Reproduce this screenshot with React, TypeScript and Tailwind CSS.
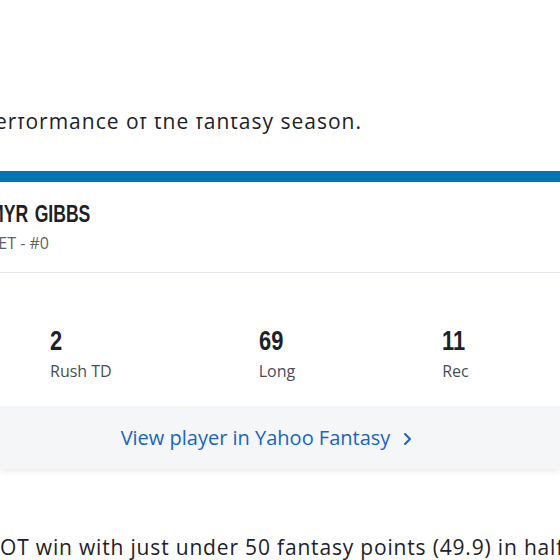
import React from "react";

const body = { fontFamily: '"Open Sans", "Noto Sans", sans-serif' };
const narrow = {
  fontFamily: '"Liberation Sans", Arial, sans-serif',
};

function Stat({ value, label }: { value: string; label: string }) {
  return (
    <div className="flex flex-col">
      <div className="text-[28px] leading-[32px] font-bold text-[#1d2228]" style={narrow}>
        <span className="inline-block origin-left scale-x-[0.78]">{value}</span>
      </div>
      <div className="mt-[2px] text-[16px] leading-[24px] text-[#464e56]" style={body}>
        {label}
      </div>
    </div>
  );
}

export default function App() {
  return (
    <div className="w-[560px] h-[560px] overflow-hidden bg-white text-[#1d2228]" style={body}>
      <div className="h-[117px]" />
      <div className="h-[54px] overflow-hidden">
        <div className="-mt-[12px] w-[362px] flex justify-end whitespace-nowrap text-[21px] leading-[32px] tracking-[1px]">
          <span className="shrink-0">performance of the fantasy season.</span>
        </div>
      </div>

      <div className="w-[560px] border-t-[11px] border-[#0076b6] bg-white shadow-[0_3px_6px_rgba(0,0,0,0.07)]">
        <div className="pt-[18px] pb-[17px] border-b border-[#e3e6ea]">
          <div
            className="w-[90px] flex justify-end whitespace-nowrap text-[23px] leading-[28px] font-bold text-[#1d2228]"
            style={narrow}
          >
            <span className="shrink-0 inline-block origin-right scale-x-[0.765] [word-spacing:2px]">JAHMYR GIBBS</span>
          </div>
          <div className="mt-[3px] w-[49px] flex justify-end whitespace-nowrap text-[16px] leading-[24px] text-[#5b636a]">
            <span className="shrink-0">DET - #0</span>
          </div>
        </div>

        <div className="pt-[52px] pb-[23px] pl-[50px] flex gap-[147px] whitespace-nowrap">
          <Stat value="2" label="Rush TD" />
          <Stat value="69" label="Long" />
          <Stat value="11" label="Rec" />
          <Stat value="1" label="Rec TD" />
        </div>

        <div className="bg-[#f4f6f8] pt-[18px] pb-[17px] pr-[27px] flex justify-center items-center">
          <div className="flex items-center gap-[13px] text-[20px] leading-[28px] text-[#1b63c6]">
            <span>View player in Yahoo Fantasy</span>
            <svg width="9" height="14" viewBox="0 0 9 14" fill="none" className="mt-[1px]">
              <path d="M2 2l5 5-5 5" stroke="#1b63c6" strokeWidth="2" strokeLinecap="round" strokeLinejoin="round" />
            </svg>
          </div>
        </div>
      </div>

      <div className="mt-[62px] whitespace-nowrap text-[21px] leading-[32px] tracking-[0.82px]">
        OT win with just under 50 fantasy points (49.9) in half-PPR leagues.
      </div>
    </div>
  );
}
